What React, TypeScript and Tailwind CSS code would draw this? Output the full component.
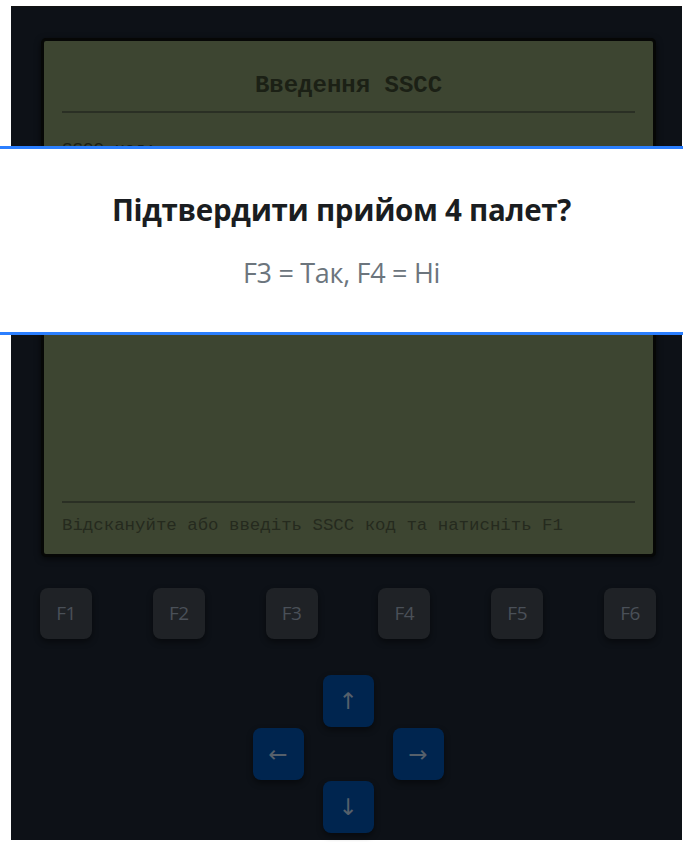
import React from "react";

const fKeys = ["F1", "F2", "F3", "F4", "F5", "F6"];

function ArrowKey({ glyph }: { glyph: string }) {
  return (
    <div className="w-[51px] h-[52px] rounded-[8px] bg-[#00254f] shadow-[0_3px_6px_rgba(0,0,0,0.45)] flex items-center justify-center text-[23px] leading-none text-[#56606b] font-['DejaVu_Sans',sans-serif]">
      {glyph}
    </div>
  );
}

export default function App() {
  return (
    <div className="relative w-[683px] h-[842px] bg-white overflow-hidden pt-[6px] pl-[11px]">
      {/* terminal body */}
      <div className="w-[671px] h-[834px] bg-[#0d1117] border-t border-[#121212] pl-[29px] pr-[26px] pt-[31px] flex flex-col">
        {/* LCD screen */}
        <div className="ml-[1px] h-[519px] rounded-[5px] border-[3px] border-[#060706] bg-[#3d4531] shadow-[0_2px_6px_rgba(0,0,0,0.6)] flex flex-col font-['Liberation_Mono','Courier_New',monospace] text-[#1b2015]">
          <div className="mx-[18px] pt-[31px] pb-[11px] border-b-2 border-[#2a2f24] text-center text-[24px] font-bold leading-[28px]">
            Введення SSCC
          </div>
          <div className="mx-[18px] mt-[26px] text-[17.4px] leading-[22px]">SSCC код:</div>
          <div className="flex-1" />
          <div className="mx-[18px] border-t-2 border-[#2a2f24] pt-[12px] pb-[17px] text-[17.4px] leading-[22px] text-[#252a1e]">
            Відскануйте або введіть SSCC код та натисніть F1
          </div>
        </div>

        {/* function keys */}
        <div className="mt-[31px] flex justify-between">
          {fKeys.map((k) => (
            <div
              key={k}
              className="w-[52px] h-[51px] rounded-[8px] bg-[#1f2226] shadow-[0_3px_6px_rgba(0,0,0,0.45)] flex items-center justify-center text-[19px] text-[#4a5058] font-['Open_Sans',sans-serif] tracking-[-0.5px]"
            >
              {k}
            </div>
          ))}
        </div>

        {/* navigation pad */}
        <div className="mt-[36px] self-center grid grid-cols-[51px_51px_51px] gap-x-[19px] gap-y-[1px]">
          <div />
          <ArrowKey glyph="↑" />
          <div />
          <ArrowKey glyph="←" />
          <div />
          <ArrowKey glyph="→" />
          <div />
          <ArrowKey glyph="↓" />
          <div />
        </div>
      </div>

      {/* confirmation banner */}
      <div className="absolute left-0 right-0 top-[146px] h-[189px] bg-white border-y-[3px] border-[#2b7fff] flex flex-col items-center font-['Open_Sans',sans-serif]">
        <div className="mt-[43px] text-[29.5px] font-bold leading-[36px] text-[#1a1d21] tracking-[-0.3px]">
          Підтвердити прийом 4 палет?
        </div>
        <div className="mt-[29px] text-[27px] leading-[32px] text-[#6c757d] tracking-[-0.3px]">F3 = Так, F4 = Ні</div>
      </div>
    </div>
  );
}
